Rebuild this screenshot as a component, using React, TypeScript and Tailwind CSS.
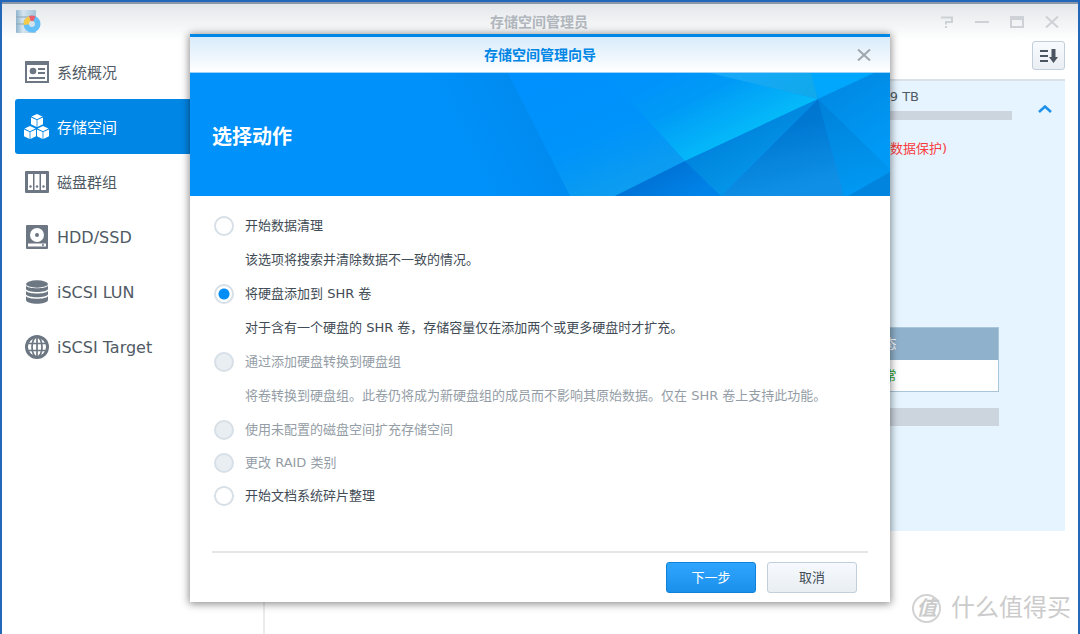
import { useState } from "react";
import type { ReactNode } from "react";

type NavItem = {
  id: string;
  label: string;
  icon: ReactNode;
  latin?: boolean;
};

type Action = {
  id: string;
  label: string;
  description?: string;
  disabled?: boolean;
};

const navItems: NavItem[] = [
  { id: "overview", label: "系统概况", icon: <OverviewIcon /> },
  { id: "volume", label: "存储空间", icon: <VolumeIcon /> },
  { id: "group", label: "磁盘群组", icon: <GroupIcon /> },
  { id: "disk", label: "HDD/SSD", icon: <DiskIcon />, latin: true },
  { id: "lun", label: "iSCSI LUN", icon: <LunIcon />, latin: true },
  { id: "target", label: "iSCSI Target", icon: <TargetIcon />, latin: true },
];

const actions: Action[] = [
  {
    id: "scrub",
    label: "开始数据清理",
    description: "该选项将搜索并清除数据不一致的情况。",
  },
  {
    id: "add",
    label: "将硬盘添加到 SHR 卷",
    description: "对于含有一个硬盘的 SHR 卷，存储容量仅在添加两个或更多硬盘时才扩充。",
  },
  {
    id: "convert",
    label: "通过添加硬盘转换到硬盘组",
    description:
      "将卷转换到硬盘组。此卷仍将成为新硬盘组的成员而不影响其原始数据。仅在 SHR 卷上支持此功能。",
    disabled: true,
  },
  { id: "expand", label: "使用未配置的磁盘空间扩充存储空间", disabled: true },
  { id: "raid", label: "更改 RAID 类别", disabled: true },
  { id: "defrag", label: "开始文档系统碎片整理" },
];

function AppLogo() {
  return (
    <svg width="26" height="26" viewBox="0 0 26 26" aria-hidden="true">
      <defs>
        <linearGradient id="case" x1="0" x2="1" y1="0" y2="0">
          <stop offset="0" stopColor="#8fb4ce" />
          <stop offset="0.35" stopColor="#d5e5f0" />
          <stop offset="1" stopColor="#a5c3d8" />
        </linearGradient>
      </defs>
      <rect width="20" height="23" y="1" rx="1" fill="url(#case)" />
      <path d="M0 8h20M0 15h20" stroke="#8ea5b6" strokeWidth="1" />
      <circle cx="16" cy="15" r="8.500" fill="#62bff8" />
      <path d="M16 15 7.500 16A8.500 8.500 0 0 1 13 7Z" fill="#f6cb4a" />
      <path d="M16 15 13 7a8.500 8.500 0 0 1 6.500.6Z" fill="#ee5e6c" />
      <circle cx="16" cy="15" r="3" fill="#d3e3ee" />
    </svg>
  );
}

function OverviewIcon() {
  return (
    <svg width="24" height="24" viewBox="0 0 24 24" aria-hidden="true">
      <rect x="1" y="2" width="22" height="20" fill="none" stroke="#6c7783" strokeWidth="2" />
      <path d="M1 3h22" stroke="#6c7783" strokeWidth="4" />
      <circle cx="8" cy="11" r="3.300" fill="#6c7783" />
      <path d="M13 9h7M13 13h7M4 18h16" stroke="#6c7783" strokeWidth="2" />
    </svg>
  );
}

function Cube({ x, y }: { x: number; y: number }) {
  return (
    <g transform={`translate(${x} ${y})`}>
      <path d="M6 0 11.500 2.600 6 5.200.5 2.600Z" />
      <path d="M0 3.400 5.600 6.100V13L0 10.200Z" />
      <path d="M12 3.400 6.400 6.100V13l5.600-2.800Z" />
    </g>
  );
}

function VolumeIcon() {
  return (
    <svg
      width="26"
      height="26"
      viewBox="0 0 26 26"
      fill="#fff"
      className="shrink-0"
      aria-hidden="true"
    >
      <Cube x={7} y={0} />
      <Cube x={0} y={12} />
      <Cube x={13} y={12} />
    </svg>
  );
}

function GroupIcon() {
  return (
    <svg width="24" height="24" viewBox="0 0 24 24" aria-hidden="true">
      <rect y="1" width="24" height="22" rx="1" fill="#6c7783" />
      <path d="M3 4h5v16H3zM9.500 4h5v16h-5zM16 4h5v16h-5z" fill="#fff" />
      <circle cx="5.500" cy="16.500" r="1.200" fill="#6c7783" />
      <circle cx="12" cy="16.500" r="1.200" fill="#6c7783" />
      <circle cx="18.500" cy="16.500" r="1.200" fill="#6c7783" />
    </svg>
  );
}

function DiskIcon() {
  return (
    <svg width="24" height="24" viewBox="0 0 24 24" aria-hidden="true">
      <rect x="1" width="22" height="24" rx="1" fill="#6c7783" />
      <circle cx="12" cy="10" r="7" fill="#fff" />
      <circle cx="12" cy="10" r="2" fill="#6c7783" />
      <path d="M3 18.500h18v3H3z" fill="#fff" />
      <circle cx="18" cy="20" r="1" fill="#6c7783" />
    </svg>
  );
}

function LunIcon() {
  return (
    <svg width="24" height="24" viewBox="0 0 24 24" fill="#6c7783" aria-hidden="true">
      <ellipse cx="12" cy="4" rx="11" ry="3.700" />
      <path d="M1 5.500c1.500 3.700 20.500 3.700 22 0V9c-1 4-21 4-22 0Z" />
      <path d="M1 10.700c1.500 3.700 20.500 3.700 22 0v3.500c-1 4-21 4-22 0Z" />
      <path d="M1 15.900c1.500 3.700 20.500 3.700 22 0V20c-1 5-21 5-22 0Z" />
    </svg>
  );
}

function TargetIcon() {
  return (
    <svg width="24" height="24" viewBox="0 0 24 24" aria-hidden="true">
      <circle cx="12" cy="12" r="12" fill="#6c7783" />
      <circle cx="12" cy="12" r="9" fill="#fff" />
      <g fill="none" stroke="#6c7783" strokeWidth="1.700">
        <path d="M12 2v20M2 8.500h20M2 15.500h20" />
        <ellipse cx="12" cy="12" rx="5" ry="10" />
      </g>
    </svg>
  );
}

function CloseIcon() {
  return (
    <svg width="14" height="12" viewBox="0 0 14 12" aria-hidden="true">
      <path d="M1 .5 13 11.500M13 .5 1 11.500" fill="none" stroke="currentColor" strokeWidth="2" />
    </svg>
  );
}

function WindowControls() {
  return (
    <div className="flex items-center gap-[21px] text-[#ced2d6]">
      <button type="button" aria-label="帮助">
        <svg width="14" height="12" viewBox="0 0 14 12" aria-hidden="true">
          <path d="M1 1.500h11v4.500H6v2.500M6 10v2" fill="none" stroke="currentColor" strokeWidth="2" />
        </svg>
      </button>
      <button type="button" aria-label="最小化">
        <svg width="14" height="12" viewBox="0 0 14 12" aria-hidden="true">
          <path d="M0 6h14" stroke="currentColor" strokeWidth="2" />
        </svg>
      </button>
      <button type="button" aria-label="最大化">
        <svg width="14" height="12" viewBox="0 0 14 12" aria-hidden="true">
          <rect x="1" y="1" width="12" height="10" fill="none" stroke="currentColor" strokeWidth="2" />
          <path d="M1 3h12" stroke="currentColor" strokeWidth="2" />
        </svg>
      </button>
      <button type="button" aria-label="关闭">
        <CloseIcon />
      </button>
    </div>
  );
}

function Sidebar() {
  const [active, setActive] = useState("volume");

  return (
    <nav className="w-[263px] shrink-0 border-r-2 border-[#ebebeb] pl-[13px]">
      <ul className="pt-1">
        {navItems.map((item) => (
          <li key={item.id}>
            <button
              type="button"
              onClick={() => setActive(item.id)}
              className={`flex h-[55px] w-full items-center gap-2 rounded-l-[3px] pl-[10px] ${
                item.latin ? "text-base" : "text-[15px]"
              } ${active === item.id ? "bg-[#0086e5] text-white" : "text-[#505a64]"}`}
            >
              <span className="flex w-6 shrink-0 justify-center">{item.icon}</span>
              <span className="pt-[3px]">{item.label}</span>
            </button>
          </li>
        ))}
      </ul>
    </nav>
  );
}

function VolumePanel() {
  return (
    <main className="flex min-w-0 grow flex-col pr-[13px] pl-4">
      <div className="flex justify-end pt-px">
        <button
          type="button"
          aria-label="排序"
          className="flex h-[29px] w-[33px] items-center justify-center rounded-[3px] border border-[#c3cedb] bg-linear-to-b from-[#f8fbfe] to-[#eaeff4]"
        >
          <svg width="18" height="14" viewBox="0 0 18 14" aria-hidden="true">
            <path d="M0 2h8M0 7h8M0 12h8" stroke="#4a5561" strokeWidth="2" />
            <path d="M11.500 0h4v8H18l-4.500 6L9 8h2.500z" fill="#4a5561" />
          </svg>
        </button>
      </div>

      <section className="mt-[9px] h-[452px] border-t-2 border-[#d8e0e8] bg-[#e5f4ff] text-[#505a64]">
        <div className="flex items-center pr-[13px]">
          <div className="grow pr-[26px] pt-[6px]">
            <div className="pr-[93px] text-right text-[13px] leading-5">3.49 TB</div>
            <div className="mt-1 h-[9px] bg-[#ccd4de]"></div>
          </div>
          <button type="button" aria-label="收起" className="mt-4">
            <svg width="14" height="8" viewBox="0 0 14 8" aria-hidden="true">
              <path d="M1 7 7 1.500 13 7" fill="none" stroke="#1e90ea" strokeWidth="2.500" />
            </svg>
          </button>
        </div>
        <div className="mt-[19px] pr-[118px] text-right text-[13px] leading-5 text-[#fa3c3c]">
          (无数据保护)
        </div>

        <div className="mt-[168px] pr-[66px] pl-4">
          <table className="w-full border-collapse border border-[#a9c5d9] bg-white text-[13px]">
            <thead>
              <tr className="h-8 bg-[#8fb1cc] text-white">
                <th className="text-left font-normal">名称</th>
                <th className="w-[128px] text-left font-normal">状态</th>
              </tr>
            </thead>
            <tbody>
              <tr className="h-8">
                <td>硬盘 1</td>
                <td className="text-[#1fa01f]">正常</td>
              </tr>
            </tbody>
          </table>
          <div className="mt-4 h-[18px] bg-[#ccd4de]"></div>
        </div>
      </section>
    </main>
  );
}

function BannerArt() {
  return (
    <svg width="460" height="123" viewBox="-60 0 460 123" className="shrink-0" aria-hidden="true">
      <defs>
        <linearGradient id="edge" gradientUnits="userSpaceOnUse" x1="-20" y1="95" x2="49" y2="60">
          <stop offset="0" stopColor="#0091fa" />
          <stop offset="1" stopColor="#008bf0" />
        </linearGradient>
        <linearGradient id="mid" x1="0" y1="0" x2="0.6" y2="1">
          <stop offset="0" stopColor="#0090ff" />
          <stop offset="0.6" stopColor="#0093fa" />
          <stop offset="1" stopColor="#0d9df0" />
        </linearGradient>
        <linearGradient id="glow" gradientUnits="userSpaceOnUse" x1="175" y1="0" x2="215" y2="80">
          <stop offset="0" stopColor="#0093fb" />
          <stop offset="0.4" stopColor="#009af6" />
          <stop offset="1" stopColor="#05b9f9" />
        </linearGradient>
        <linearGradient id="top" x1="0" y1="0" x2="1" y2="0.4">
          <stop offset="0" stopColor="#1aa8fb" />
          <stop offset="1" stopColor="#11a9ec" />
        </linearGradient>
        <linearGradient id="right" x1="0" y1="0" x2="0.5" y2="1">
          <stop offset="0" stopColor="#0085df" />
          <stop offset="1" stopColor="#009af6" />
        </linearGradient>
        <linearGradient id="lower" x1="0" y1="0" x2="0.2" y2="1">
          <stop offset="0" stopColor="#0080d8" />
          <stop offset="1" stopColor="#0098f2" />
        </linearGradient>
        <linearGradient id="deep" x1="0.1" y1="0" x2="0.4" y2="1">
          <stop offset="0" stopColor="#0070cb" />
          <stop offset="0.4" stopColor="#0079d3" />
          <stop offset="1" stopColor="#0f90e6" />
        </linearGradient>
        <linearGradient id="fold" x1="0.3" y1="0.4" x2="0.6" y2="0.8">
          <stop offset="0" stopColor="#0084dd" />
          <stop offset="1" stopColor="#0497e9" />
        </linearGradient>
        <linearGradient id="base" x1="0" y1="0" x2="1" y2="0.6">
          <stop offset="0" stopColor="#0066c8" />
          <stop offset="1" stopColor="#0083e8" />
        </linearGradient>
      </defs>
      <path d="M-60 0H20L82 123H-60Z" fill="url(#edge)" />
      <path d="M18 0H117L195 88 125 123H80Z" fill="url(#mid)" />
      <path d="M115 0H222L328 26 195 88Z" fill="url(#glow)" />
      <path d="M220 0H322L328 26Z" fill="url(#top)" />
      <path d="M321 0H386L328 26Z" fill="#00a7fc" />
      <path d="M328 26 384 0H400V97Z" fill="url(#right)" />
      <path d="M328 26 400 96V123H354Z" fill="url(#lower)" />
      <path d="M358 123 400 99V123Z" fill="#0084de" />
      <path d="M328 26 354 123H231Z" fill="url(#deep)" />
      <path d="M328 26 231 123 195 88Z" fill="url(#fold)" />
      <path d="M195 88 231 123H125Z" fill="url(#base)" />
    </svg>
  );
}

function WizardDialog() {
  const [selected, setSelected] = useState("add");

  return (
    <div
      role="dialog"
      aria-labelledby="wizard-title"
      className="flex w-[700px] flex-col border-t-[3px] border-[#0086e5] bg-white shadow-[0_1px_8px_1px_rgba(0,0,0,0.45)]"
    >
      <div className="flex h-9 items-center border-b border-[#9ed2f8] bg-linear-to-b from-[#d8ebfa] to-white pr-[19px] pl-[33px]">
        <h1 id="wizard-title" className="grow text-center text-sm font-bold text-[#0086e5]">
          存储空间管理向导
        </h1>
        <button type="button" aria-label="关闭" className="text-[#9fa6ad]">
          <CloseIcon />
        </button>
      </div>

      <div className="flex h-[123px] items-center justify-between bg-[#0091fa]">
        <h2 className="pt-1 pl-[22px] text-xl font-bold whitespace-nowrap text-white">选择动作</h2>
        <BannerArt />
      </div>

      <form className="flex flex-col" onSubmit={(e) => e.preventDefault()}>
        <div className="px-6 pt-[13px] text-[13px] text-[#414b55]">
          {actions.map((action) => (
            <div key={action.id} className={action.disabled ? "text-[#949da6]" : ""}>
              <label
                className={`flex items-center gap-[11px] ${
                  action.description ? "h-[34px]" : "h-[33px]"
                }`}
              >
                <input
                  type="radio"
                  name="action"
                  checked={selected === action.id}
                  disabled={action.disabled}
                  onChange={() => setSelected(action.id)}
                  className="size-5 shrink-0 appearance-none rounded-full border-2 border-[#d7dfe7] bg-white checked:bg-[radial-gradient(circle,#008df5_5px,#fff_6px)] disabled:bg-[#e9eef3]"
                />
                {action.label}
              </label>
              {action.description && (
                <p className="flex h-[34px] items-center pl-[31px] whitespace-nowrap">
                  {action.description}
                </p>
              )}
            </div>
          ))}
        </div>

        <div className="mx-[22px] mt-[39px] flex justify-end gap-[11px] border-t-2 border-[#e6e6e6] pt-[9px] pr-[11px] pb-[9px] text-[13px]">
          <button
            type="submit"
            className="h-[31px] w-[90px] rounded-[3px] border border-[#0f81d8] bg-linear-to-b from-[#30a5ff] to-[#1a90ea] text-white"
          >
            下一步
          </button>
          <button
            type="button"
            className="h-[31px] w-[90px] rounded-[3px] border border-[#c3cedb] bg-linear-to-b from-[#f6fafe] to-[#e9eef3] text-[#414b55]"
          >
            取消
          </button>
        </div>
      </form>
    </div>
  );
}

function Watermark() {
  return (
    <div className="pointer-events-none absolute right-[7px] bottom-[10px] flex items-center gap-[10px] text-[#cbcbcb]">
      <span className="flex size-[29px] items-center justify-center rounded-full border-2 border-[#d2d2d2] text-xl leading-none font-bold italic">
        值
      </span>
      <span className="text-2xl leading-8">什么值得买</span>
    </div>
  );
}

export default function App() {
  return (
    <div className="relative flex min-h-screen flex-col overflow-hidden border-x-2 border-t-2 border-[#2267b8] bg-white font-['DejaVu_Sans','Noto_Sans_CJK_SC',sans-serif]">
      <header className="flex h-[38px] items-center border-t-2 border-[#8a97a8] bg-linear-to-b from-[#e4e7ea] to-white pr-[19px] pl-[14px]">
        <div className="w-[122px]">
          <AppLogo />
        </div>
        <div className="grow text-center text-sm font-bold text-[#b1b7bd]">存储空间管理员</div>
        <WindowControls />
      </header>

      <div className="flex grow">
        <Sidebar />
        <VolumePanel />
      </div>

      <div className="absolute inset-0 flex items-start justify-center pt-8">
        <WizardDialog />
      </div>
      <Watermark />
    </div>
  );
}
